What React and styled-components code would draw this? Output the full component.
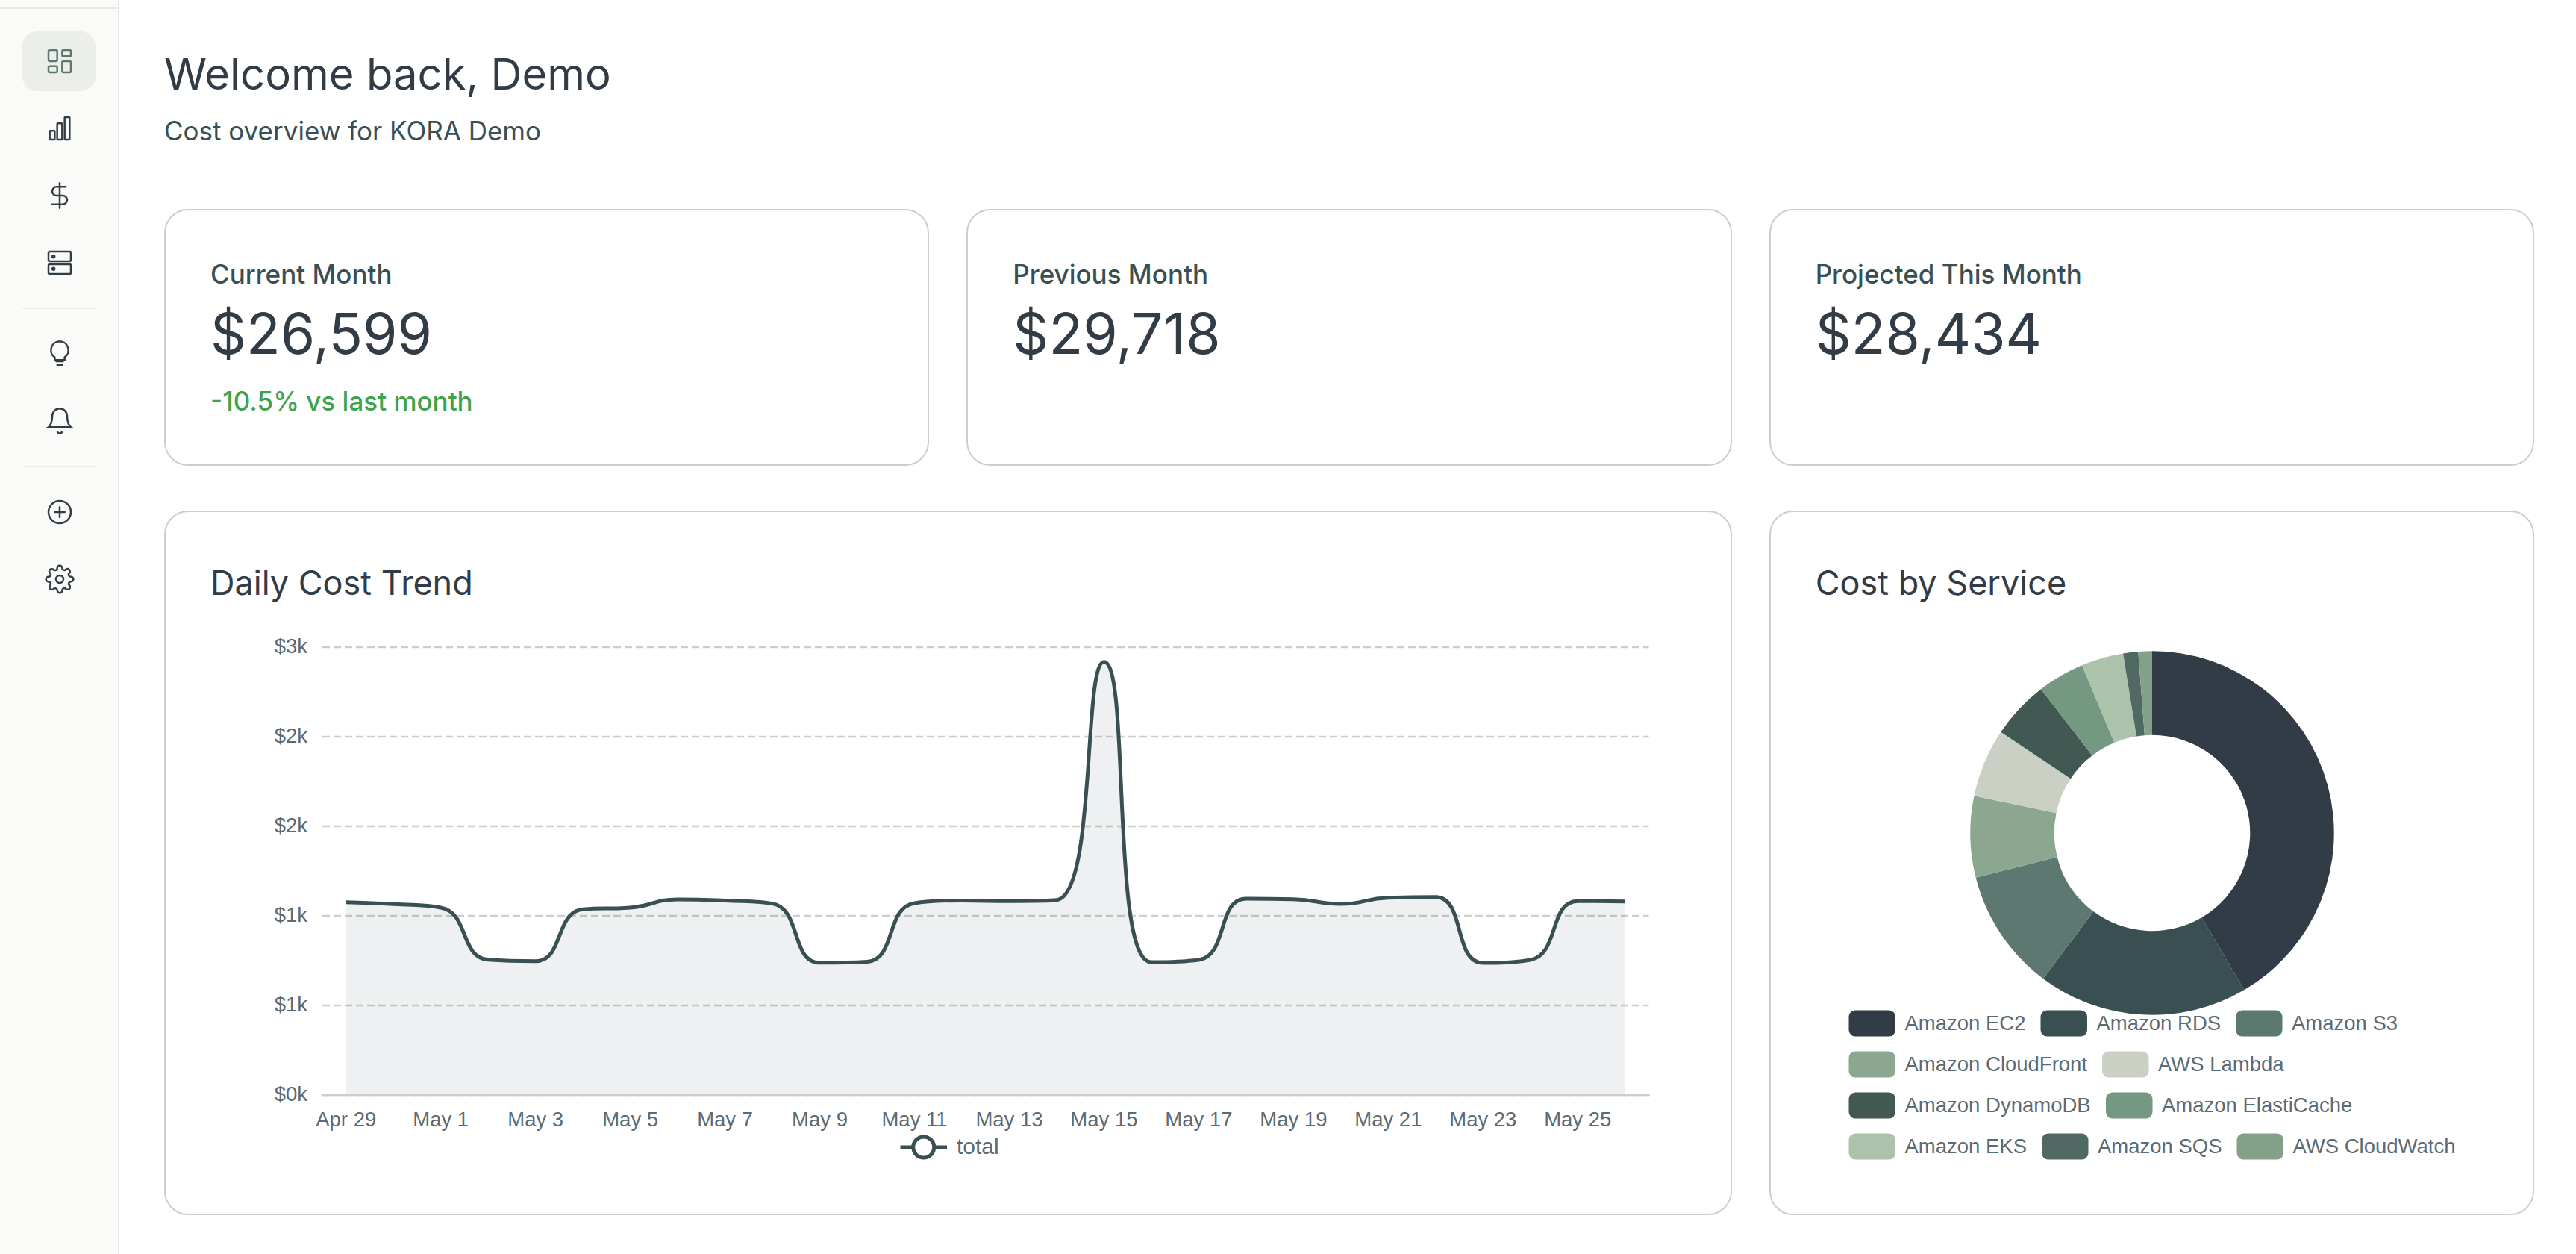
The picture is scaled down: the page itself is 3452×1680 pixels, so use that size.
import React from "react";
import styled, { createGlobalStyle } from "styled-components";

const ink = "#323c46";
const pine = "#3a4f52";
const mist = "#cbd0c5";
const label = "#5c6b73";

const GlobalStyle = createGlobalStyle`
  *, *::before, *::after { box-sizing: border-box; }
  body {
    margin: 0;
    background: #ffffff;
    color: ${ink};
    font-family: Inter, "Liberation Sans", sans-serif;
  }
`;

const Shell = styled.div`
  display: flex;
  min-height: 100vh;
`;

const Sidebar = styled.aside`
  flex: 0 0 160px;
  background: #fafaf8;
  border-right: 2px solid #e8e9e6;
`;

const SidebarTop = styled.div`
  height: 12px;
  border-bottom: 2px solid #e8e9e6;
`;

const Nav = styled.nav`
  display: flex;
  flex-direction: column;
  gap: 20px;
  padding: 30px;
`;

const NavGroup = styled.div`
  display: flex;
  flex-direction: column;
  gap: 10px;
`;

const NavRule = styled.hr`
  width: 100%;
  height: 2px;
  margin: 0;
  border: 0;
  background: #ebece9;
`;

const NavLink = styled.a`
  display: flex;
  align-items: center;
  height: 80px;
  padding-left: 30px;
  border-radius: 20px;
  color: ${(p) => (p.$active ? "#5c7870" : ink)};
  background: ${(p) => (p.$active ? "#ebeee9" : "transparent")};
`;

const Glyph = styled.svg`
  flex: none;
  width: 40px;
  height: 40px;
  fill: none;
  stroke: currentColor;
  stroke-width: 1.5;
  stroke-linecap: ${(p) => (p.$butt ? "butt" : "round")};
  stroke-linejoin: ${(p) => (p.$butt ? "miter" : "round")};
`;

const Main = styled.main`
  flex: 1;
  min-width: 0;
  padding: 60px 56px 52px 60px;
`;

const Header = styled.header`
  display: flex;
  flex-direction: column;
  gap: 10px;
  margin-bottom: 78px;
`;

const PageTitle = styled.h1`
  margin: 0;
  font-size: 58px;
  line-height: 78px;
  font-weight: 400;
`;

const Subtitle = styled.p`
  margin: 0;
  font-size: 35px;
  line-height: 54px;
  color: ${pine};
`;

const Grid = styled.div`
  display: grid;
  grid-template-columns: repeat(3, minmax(0, 1fr));
  gap: 60px 50px;
`;

const Card = styled.section`
  grid-column: span ${(p) => p.$span || 1};
  min-width: 0;
  padding: 60px;
  border: 2px solid ${mist};
  border-radius: 32px;
  background: #ffffff;
`;

const StatLabel = styled.h2`
  margin: 0 0 10px;
  font-size: 35px;
  line-height: 50px;
  font-weight: 500;
  color: ${pine};
`;

const StatValue = styled.p`
  margin: 0;
  font-size: 75px;
  line-height: 90px;
`;

const StatChange = styled.p`
  margin: 20px 0 0;
  font-size: 35px;
  line-height: 50px;
  font-weight: 500;
  color: #3fa34d;
`;

const CardTitle = styled.h2`
  margin: 0;
  font-size: 45px;
  line-height: 70px;
  font-weight: 400;
`;

const Chart = styled.svg`
  display: block;
  width: 100%;
  height: 750px;
  overflow: visible;
  font-family: "Liberation Sans", Arial, sans-serif;
`;

const ChartText = styled.text`
  fill: ${label};
  font-size: ${(p) => p.$size || 11}px;
  text-anchor: ${(p) => p.$anchor || "start"};
`;

const navGroups = [
  [
    {
      name: "Dashboard",
      active: true,
      art: (
        <>
          <rect x="3" y="3" width="7" height="9" rx="1" />
          <rect x="14" y="3" width="7" height="5" rx="1" />
          <rect x="14" y="12" width="7" height="9" rx="1" />
          <rect x="3" y="16" width="7" height="5" rx="1" />
        </>
      ),
    },
    {
      name: "Reports",
      art: (
        <>
          <rect x="4" y="14" width="4" height="7" rx="0.5" />
          <rect x="10" y="8" width="4" height="13" rx="0.5" />
          <rect x="16" y="3" width="4" height="18" rx="0.5" />
        </>
      ),
    },
    {
      name: "Costs",
      art: (
        <>
          <path d="M12 2v20" />
          <path d="M17 5H9.5a3.5 3.5 0 0 0 0 7h5a3.5 3.5 0 0 1 0 7H6" />
        </>
      ),
    },
    {
      name: "Resources",
      art: (
        <>
          <rect x="3" y="3" width="18" height="7.8" rx="1" />
          <rect x="3" y="13.2" width="18" height="7.8" rx="1" />
          <circle cx="7" cy="7" r="0.9" />
          <circle cx="7" cy="17" r="0.9" />
        </>
      ),
    },
  ],
  [
    {
      name: "Insights",
      butt: true,
      art: (
        <>
          <path d="M12 2a7 7 0 0 0-4 12.74V17h8v-2.26A7 7 0 0 0 12 2z" />
          <path d="M8.7 18h6.6M9.4 21h5.2" />
        </>
      ),
    },
    {
      name: "Alerts",
      art: (
        <>
          <path
            strokeLinejoin="miter"
            d="M18 8A6 6 0 0 0 6 8c0 7-3 9-3 9h18s-3-2-3-9"
          />
          <path d="M13.73 21a2 2 0 0 1-3.46 0" />
        </>
      ),
    },
  ],
  [
    {
      name: "Add",
      art: (
        <>
          <circle cx="12" cy="12" r="9" />
          <path d="M12 8v8M8 12h8" />
        </>
      ),
    },
    {
      name: "Settings",
      art: (
        <>
          <circle cx="12" cy="12" r="3" />
          <path d="M19.4 15a1.65 1.65 0 0 0 .33 1.82l.06.06a2 2 0 0 1 0 2.83 2 2 0 0 1-2.83 0l-.06-.06a1.65 1.65 0 0 0-1.82-.33 1.65 1.65 0 0 0-1 1.51V21a2 2 0 0 1-2 2 2 2 0 0 1-2-2v-.09A1.65 1.65 0 0 0 9 19.4a1.65 1.65 0 0 0-1.82.33l-.06.06a2 2 0 0 1-2.83 0 2 2 0 0 1 0-2.83l.06-.06a1.65 1.65 0 0 0 .33-1.82 1.65 1.65 0 0 0-1.51-1H3a2 2 0 0 1-2-2 2 2 0 0 1 2-2h.09A1.65 1.65 0 0 0 4.6 9a1.65 1.65 0 0 0-.33-1.82l-.06-.06a2 2 0 0 1 0-2.83 2 2 0 0 1 2.83 0l.06.06a1.65 1.65 0 0 0 1.82.33H9a1.65 1.65 0 0 0 1-1.51V3a2 2 0 0 1 2-2 2 2 0 0 1 2 2v.09a1.65 1.65 0 0 0 1 1.51 1.65 1.65 0 0 0 1.82-.33l.06-.06a2 2 0 0 1 2.83 0 2 2 0 0 1 0 2.83l-.06.06a1.65 1.65 0 0 0-.33 1.82V9a1.65 1.65 0 0 0 1.51 1H21a2 2 0 0 1 2 2 2 2 0 0 1-2 2h-.09a1.65 1.65 0 0 0-1.51 1z" />
        </>
      ),
    },
  ],
];

const stats = [
  { title: "Current Month", value: "$26,599", change: "-10.5% vs last month" },
  { title: "Previous Month", value: "$29,718" },
  { title: "Projected This Month", value: "$28,434" },
];

const plot = { left: 60, right: 771, top: 20, bottom: 260, max: 2500 };

const daily = [
  1072, 1061, 1042, 751, 743, 1032, 1042, 1088, 1081, 1064, 734, 740, 1067,
  1081, 1078, 1084, 2414, 737, 750, 1092, 1089, 1062, 1097, 1101, 733, 750,
  1078, 1076,
];

const ticks = [
  [2500, "$3k"],
  [2000, "$2k"],
  [1500, "$2k"],
  [1000, "$1k"],
  [500, "$1k"],
  [0, "$0k"],
];

const days = [
  "Apr 29", "May 1", "May 3", "May 5", "May 7", "May 9", "May 11",
  "May 13", "May 15", "May 17", "May 19", "May 21", "May 23", "May 25",
];

const band = (plot.right - plot.left) / daily.length;
const xAt = (i) => plot.left + band * (i + 0.5);
const yAt = (v) =>
  plot.bottom - ((plot.bottom - plot.top) * v) / plot.max;

const clamp = (v, a, b) =>
  Math.max(Math.min(v, Math.max(a, b)), Math.min(a, b));

// Smooth curve whose control points never leave the span of their segment.
function smoothPath(points) {
  let d = `M${points[0][0]} ${points[0][1]}`;
  let [c0x, c0y] = points[0];
  for (let i = 1; i < points.length; i += 1) {
    const [px, py] = points[i - 1];
    const [x, y] = points[i];
    let c1x = x;
    let c1y = y;
    let nx0 = x;
    let ny0 = y;
    if (i < points.length - 1) {
      const [nx, ny] = points[i + 1];
      const lenPrev = Math.hypot(x - px, y - py);
      const lenNext = Math.hypot(nx - x, ny - y);
      const ratio = lenNext / (lenNext + lenPrev);
      nx0 = clamp(x + (nx - px) * 0.5 * ratio, nx, x);
      ny0 = clamp(y + (ny - py) * 0.5 * ratio, ny, y);
      c1x = clamp(x - ((nx0 - x) * lenPrev) / lenNext, px, x);
      c1y = clamp(y - ((ny0 - y) * lenPrev) / lenNext, py, y);
      nx0 = x + ((x - c1x) * lenNext) / lenPrev;
      ny0 = y + ((y - c1y) * lenNext) / lenPrev;
    }
    d += `C${c0x} ${c0y} ${c1x} ${c1y} ${x} ${y}`;
    c0x = nx0;
    c0y = ny0;
  }
  return d;
}

function TrendChart() {
  const line = smoothPath(daily.map((v, i) => [xAt(i), yAt(v)]));
  const area = `${line}L${xAt(daily.length - 1)} ${plot.bottom}L${xAt(0)} ${plot.bottom}Z`;
  return (
    <Chart
      viewBox="0 0 790 300"
      preserveAspectRatio="xMinYMin meet"
      role="img"
      aria-label="Daily cost trend"
    >
      {ticks.map(([value, text]) => (
        <g key={value}>
          <path
            d={`M${plot.left} ${yAt(value) + 0.4}H${plot.right}`}
            stroke={mist}
            strokeDasharray="4 2"
          />
          <ChartText x="52" y={yAt(value) + 3.7} $anchor="end">
            {text}
          </ChartText>
        </g>
      ))}
      <path d={area} fill="#37435c" fillOpacity="0.08" />
      <path
        d={`M${plot.left - 0.5} ${plot.bottom + 0.4}H${plot.right + 0.5}`}
        stroke={mist}
      />
      <path
        d={line}
        fill="none"
        stroke={pine}
        strokeWidth="2"
        strokeLinejoin="bevel"
      />
      {days.map((day, i) => (
        <ChartText key={day} x={xAt(i * 2)} y="277" $anchor="middle">
          {day}
        </ChartText>
      ))}
      <path d="M369.8 288.4h25" stroke={pine} strokeWidth="2" />
      <circle
        cx="382.3"
        cy="288.4"
        r="5.6"
        fill="#ffffff"
        stroke={pine}
        strokeWidth="2"
      />
      <ChartText x="400" y="292" $size={12}>
        total
      </ChartText>
    </Chart>
  );
}

// Each service: name, colour, end angle of its slice, legend x and row.
const services = [
  ["Amazon EC2", "#323c46", 149.6, 17.8, 0],
  ["Amazon RDS", "#3a4f52", 216.8, 120.6, 0],
  ["Amazon S3", "#5c7870", 255.8, 225.2, 0],
  ["Amazon CloudFront", "#8ca78f", 281.8, 17.8, 1],
  ["AWS Lambda", "#cbd0c5", 303.7, 153.6, 1],
  ["Amazon DynamoDB", "#425853", 322.3, 17.8, 2],
  ["Amazon ElastiCache", "#759883", 337.3, 155.6, 2],
  ["Amazon EKS", "#adc2ab", 350.8, 17.8, 3],
  ["Amazon SQS", "#506a63", 355.6, 121.2, 3],
  ["AWS CloudWatch", "#83a188", 360, 225.8, 3],
];

function slicePath(from, to) {
  const cx = 180.4;
  const cy = 120;
  const at = (r, deg) => {
    const a = ((deg - 90) * Math.PI) / 180;
    return `${cx + r * Math.cos(a)} ${cy + r * Math.sin(a)}`;
  };
  const big = to - from > 180 ? 1 : 0;
  return `M${at(97.5, from)}A97.5 97.5 0 ${big} 1 ${at(97.5, to)}L${at(52.5, to)}A52.5 52.5 0 ${big} 0 ${at(52.5, from)}Z`;
}

function ServiceChart() {
  return (
    <Chart
      viewBox="0 0 360 300"
      preserveAspectRatio="xMinYMin meet"
      role="img"
      aria-label="Cost by service"
    >
      {services.map(([name, color, end], i) => (
        <path
          key={name}
          d={slicePath(i ? services[i - 1][2] : 0, end)}
          fill={color}
        />
      ))}
      {services.map(([name, color, , x, row]) => (
        <g key={name}>
          <rect
            x={x}
            y={215 + row * 22}
            width="25"
            height="14"
            rx="3.5"
            fill={color}
          />
          <ChartText x={x + 30} y={225.7 + row * 22}>
            {name}
          </ChartText>
        </g>
      ))}
    </Chart>
  );
}

export default function App() {
  return (
    <>
      <GlobalStyle />
      <Shell>
        <Sidebar>
          <SidebarTop />
          <Nav aria-label="Main">
            {navGroups.map((group, g) => (
              <React.Fragment key={group[0].name}>
                {g > 0 && <NavRule />}
                <NavGroup>
                  {group.map((item) => (
                    <NavLink
                      key={item.name}
                      href="#"
                      aria-label={item.name}
                      $active={item.active}
                    >
                      <Glyph viewBox="0 0 24 24" $butt={item.butt} aria-hidden>
                        {item.art}
                      </Glyph>
                    </NavLink>
                  ))}
                </NavGroup>
              </React.Fragment>
            ))}
          </Nav>
        </Sidebar>
        <Main>
          <Header>
            <PageTitle>Welcome back, Demo</PageTitle>
            <Subtitle>Cost overview for KORA Demo</Subtitle>
          </Header>
          <Grid>
            {stats.map((stat) => (
              <Card key={stat.title}>
                <StatLabel>{stat.title}</StatLabel>
                <StatValue>{stat.value}</StatValue>
                {stat.change && <StatChange>{stat.change}</StatChange>}
              </Card>
            ))}
            <Card $span={2}>
              <CardTitle>Daily Cost Trend</CardTitle>
              <TrendChart />
            </Card>
            <Card>
              <CardTitle>Cost by Service</CardTitle>
              <ServiceChart />
            </Card>
          </Grid>
        </Main>
      </Shell>
    </>
  );
}
